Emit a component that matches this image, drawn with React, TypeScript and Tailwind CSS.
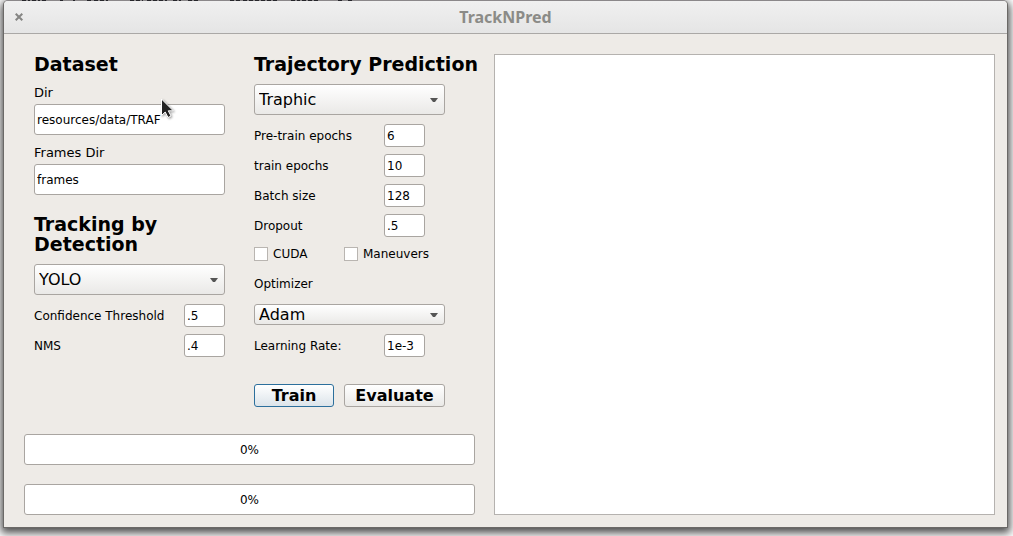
import type { ReactNode, SVGProps } from "react";

const BOX = "rounded-[3px] border border-[#a9a5a1]";
const RAISED = "bg-linear-to-b from-white to-[#eae9e7]";

function Heading({ children }: { children: ReactNode }) {
  return <h2 className="text-[19px] leading-5 font-bold whitespace-pre">{children}</h2>;
}

function PathField({ id, label, value }: { id: string; label: string; value: string }) {
  return (
    <div className="flex flex-col gap-px">
      <label htmlFor={id} className="text-[13px] leading-5">
        {label}
      </label>
      <input id={id} defaultValue={value} className={`${BOX} h-[31px] w-full bg-white px-0.5 text-xs outline-none`} />
    </div>
  );
}

function NumberField({ id, label, value }: { id: string; label: string; value: string }) {
  return (
    <div className="flex items-center text-xs">
      <label htmlFor={id}>{label}</label>
      <input id={id} defaultValue={value} className={`${BOX} ml-auto h-[23px] w-[41px] bg-white px-0.5 outline-none`} />
    </div>
  );
}

function Picker({ id, label, options, className }: { id: string; label?: string; options: string[]; className: string }) {
  return (
    <div className="grid items-center">
      <select
        id={id}
        aria-label={label}
        className={`${BOX} ${RAISED} ${className} col-start-1 row-start-1 w-full appearance-none pl-1 text-base leading-5 outline-none`}
      >
        {options.map((o) => (
          <option key={o}>{o}</option>
        ))}
      </select>
      <svg
        viewBox="0 0 8 4"
        className="pointer-events-none col-start-1 row-start-1 mr-[7px] h-1 w-2 justify-self-end fill-[#555]"
        aria-hidden="true"
      >
        <path d="M0 0h8L5 4H3z" />
      </svg>
    </div>
  );
}

function Check({ label }: { label: string }) {
  return (
    <label className="flex items-center gap-[5px] text-xs leading-5">
      <input type="checkbox" className="size-3.5 appearance-none border border-[#b9b5b1] bg-white checked:bg-[#308cc6]" />
      {label}
    </label>
  );
}

function Progress({ label }: { label: string }) {
  return (
    <div
      role="progressbar"
      aria-label={label}
      aria-valuenow={0}
      className={`${BOX} flex h-[31px] items-center justify-center bg-white text-xs`}
    >
      0%
    </div>
  );
}

function Pointer(props: SVGProps<SVGSVGElement>) {
  return (
    <svg viewBox="0 0 14 22" aria-hidden="true" {...props}>
      <path d="M1.500 1v16.500l3.700-3.500 2.800 5.500 3-1.500-2.700-5.200h5z" fill="#222" stroke="#fff" strokeWidth="1" />
    </svg>
  );
}

/* Sliver of the desktop behind the window's top edge. */
function DesktopEdge() {
  return (
    <svg className="pointer-events-none absolute top-0 left-0 h-px w-[360px]" viewBox="0 0 360 1" aria-hidden="true">
      <path
        d="M22 .5h8M32 .5h8M42 .5h6M60 .5h3M73 .5h2M87 .5h5M94 .5h14M130 .5h13M147 .5h20M173 .5h8M188 .5h12M230 .5h10M243 .5h35M291 .5h9M302 .5h18M338 .5h4M348 .5h4"
        stroke="#26262b"
        strokeDasharray="4 2"
      />
    </svg>
  );
}

export default function App() {
  return (
    <div className="relative flex min-h-screen flex-col bg-white pr-[5px] pb-2 pl-[3px] font-['DejaVu_Sans',sans-serif] text-black">
      <div className="flex flex-1 flex-col overflow-hidden rounded-t-[5px] border border-[#6b6967] border-t-[#8b888a] bg-[#eeebe7] shadow-[0_3px_9px_2px_rgba(0,0,0,0.7)]">
        <header className="grid h-[33px] grid-cols-[30px_1fr_30px] items-center border-b border-[#aaa8a6] bg-linear-to-b from-[#f0f0f0] to-[#e5e5e5]">
          <button aria-label="Close" className="flex justify-center">
            <svg viewBox="0 0 8 8" className="size-2 stroke-[#858583] stroke-2" aria-hidden="true">
              <path d="M.7.7l6.600 6.600M7.300.7L.7 7.300" />
            </svg>
          </button>
          <h1 className="text-center font-['Noto_Sans',sans-serif] text-base font-bold text-[#8b8b87]">TrackNPred</h1>
        </header>

        <main className="flex flex-1 gap-[19px] pt-5 pr-3 pb-3 pl-5">
          <form className="relative flex w-[451px] shrink-0 flex-col" onSubmit={(e) => e.preventDefault()}>
            <div className="grid grid-cols-[191px_191px] gap-x-[29px] pl-2.5">
              <section className="flex flex-col">
                <Heading>Dataset</Heading>
                <div className="mt-[9px] mb-[19px] flex flex-col gap-2">
                  <PathField id="dir" label="Dir" value="resources/data/TRAF" />
                  <PathField id="frames" label="Frames Dir" value="frames" />
                </div>
                <Heading>{"Tracking by\nDetection"}</Heading>
                <div className="mt-2.5 flex flex-col gap-[9px]">
                  <Picker id="detector" label="Detector" options={["YOLO"]} className="h-[31px]" />
                  <div className="flex flex-col gap-[7px]">
                    <NumberField id="conf" label="Confidence Threshold" value=".5" />
                    <NumberField id="nms" label="NMS" value=".4" />
                  </div>
                </div>
              </section>

              <section className="flex flex-col">
                <Heading>Trajectory Prediction</Heading>
                <div className="mt-2.5 flex flex-col gap-[9px]">
                  <Picker id="model" label="Model" options={["Traphic"]} className="h-[31px]" />
                  <div className="flex flex-col gap-[7px] pr-5">
                    <NumberField id="pretrain" label="Pre-train epochs" value="6" />
                    <NumberField id="train" label="train epochs" value="10" />
                    <NumberField id="batch" label="Batch size" value="128" />
                    <NumberField id="dropout" label="Dropout" value=".5" />
                  </div>
                </div>
                <div className="mt-[7px] grid grid-cols-[90px_1fr]">
                  <Check label="CUDA" />
                  <Check label="Maneuvers" />
                </div>
                <label htmlFor="optimizer" className="my-2.5 text-xs leading-5">
                  Optimizer
                </label>
                <div className="flex flex-col gap-[9px]">
                  <Picker id="optimizer" options={["Adam"]} className="h-[21px]" />
                  <div className="pr-5">
                    <NumberField id="rate" label="Learning Rate:" value="1e-3" />
                  </div>
                </div>
                <div className="mt-[27px] grid grid-cols-[80px_1fr] gap-2.5 text-base leading-5 font-bold">
                  <button type="submit" className="h-[23px] rounded-[3px] border border-[#2c6f9c] bg-linear-to-b from-white to-[#dce4ea]">
                    Train
                  </button>
                  <button type="button" className={`${BOX} ${RAISED} h-[23px]`}>
                    Evaluate
                  </button>
                </div>
              </section>
            </div>

            <div className="mt-[27px] flex flex-col gap-[19px]">
              <Progress label="Tracking progress" />
              <Progress label="Training progress" />
            </div>

            <Pointer className="pointer-events-none absolute top-[44px] left-[136px] h-[22px] w-3.5 drop-shadow-[1px_1px_1px_rgba(0,0,0,0.4)]" />
          </form>
          <section aria-label="Video preview" className="flex-1 border border-[#b5b2af] bg-white" />
        </main>
      </div>
      <DesktopEdge />
    </div>
  );
}
